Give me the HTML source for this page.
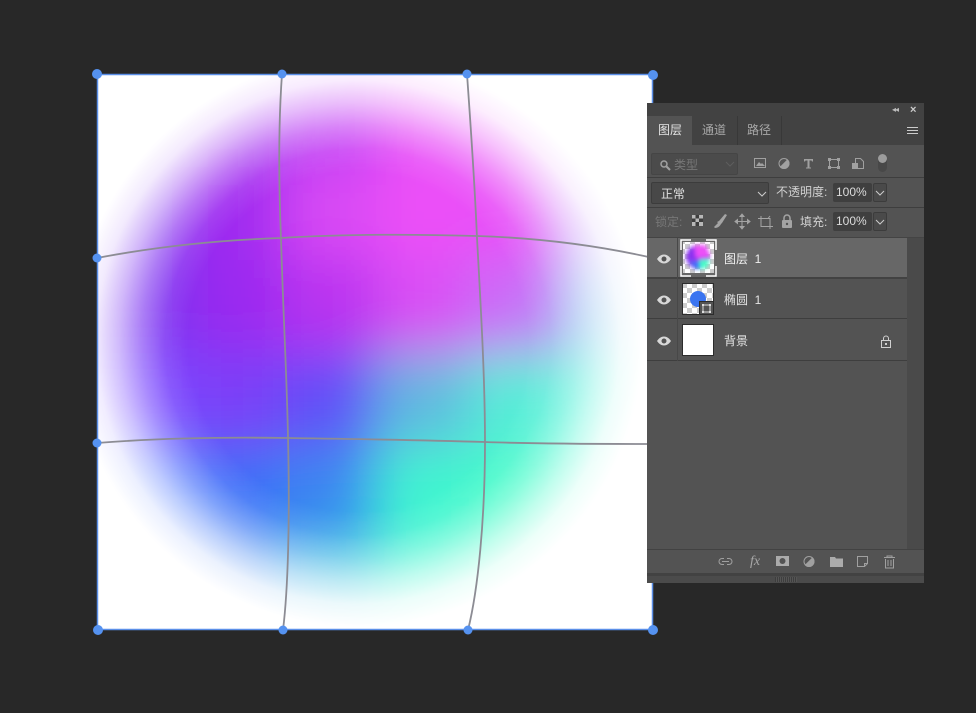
<!DOCTYPE html>
<html><head><meta charset="utf-8"><style>
*{box-sizing:border-box}
html,body{margin:0;padding:0;width:976px;height:713px;overflow:hidden;background:#282828;font-family:"Liberation Sans","Noto Sans CJK SC",sans-serif}
.abs,.t{position:absolute}
.t{white-space:nowrap;font-size:12px;line-height:14px;color:#d4d4d4}
#panel{position:absolute;left:647px;top:103px;width:277px;height:480px;background:#535353;overflow:hidden}
.line{position:absolute;height:1px;background:#3e3e3e;left:0;right:0}
.box{position:absolute;background:#454545;border:1px solid #3c3c3c;border-radius:2px}
</style></head><body>
<svg class="abs" style="left:0;top:0" width="976" height="713">
<defs>
<filter id="mesh" filterUnits="userSpaceOnUse" x="0" y="0" width="976" height="713"><feGaussianBlur stdDeviation="27"/></filter>
<radialGradient id="rg" gradientUnits="userSpaceOnUse" cx="358" cy="342" r="285">
<stop offset=".596" stop-color="#fff" stop-opacity="1"/>
<stop offset=".677" stop-color="#fff" stop-opacity=".896"/>
<stop offset=".758" stop-color="#fff" stop-opacity=".648"/>
<stop offset=".839" stop-color="#fff" stop-opacity=".352"/>
<stop offset=".919" stop-color="#fff" stop-opacity=".104"/>
<stop offset="1" stop-color="#fff" stop-opacity="0"/>
</radialGradient>
<mask id="m" maskUnits="userSpaceOnUse" x="0" y="0" width="976" height="713"><rect width="976" height="713" fill="url(#rg)"/></mask>
<clipPath id="c"><rect x="97" y="74" width="556" height="556"/></clipPath>
</defs>
<g clip-path="url(#c)">
<rect x="97" y="74" width="556" height="556" fill="#fff"/>
<g mask="url(#m)"><g filter="url(#mesh)">
<rect x="0" y="0" width="190" height="167" fill="#8a30f0"/><rect x="190" y="0" width="93" height="167" fill="#a030f0"/><rect x="283" y="0" width="93" height="167" fill="#c040f4"/><rect x="376" y="0" width="93" height="167" fill="#e850f8"/><rect x="469" y="0" width="93" height="167" fill="#e850f8"/><rect x="562" y="0" width="198" height="167" fill="#c080f8"/>
<rect x="0" y="167" width="190" height="93" fill="#8030f0"/><rect x="190" y="167" width="93" height="93" fill="#a02cf0"/><rect x="283" y="167" width="93" height="93" fill="#d848f4"/><rect x="376" y="167" width="93" height="93" fill="#ec50f8"/><rect x="469" y="167" width="93" height="93" fill="#e850f8"/><rect x="562" y="167" width="198" height="93" fill="#b080f8"/>
<rect x="0" y="260" width="190" height="93" fill="#7a30f0"/><rect x="190" y="260" width="93" height="93" fill="#9a2cf0"/><rect x="283" y="260" width="93" height="93" fill="#b830f0"/><rect x="376" y="260" width="93" height="93" fill="#d850f4"/><rect x="469" y="260" width="93" height="93" fill="#c870f8"/><rect x="562" y="260" width="198" height="93" fill="#90c8f0"/>
<rect x="0" y="353" width="190" height="93" fill="#7a48ff"/><rect x="190" y="353" width="93" height="93" fill="#7a40f8"/><rect x="283" y="353" width="93" height="93" fill="#6050f8"/><rect x="376" y="353" width="93" height="93" fill="#60b8e0"/><rect x="469" y="353" width="93" height="93" fill="#58ecd8"/><rect x="562" y="353" width="198" height="93" fill="#60f4dc"/>
<rect x="0" y="446" width="190" height="93" fill="#4070ff"/><rect x="190" y="446" width="93" height="93" fill="#3a70f8"/><rect x="283" y="446" width="93" height="93" fill="#3a88f0"/><rect x="376" y="446" width="93" height="93" fill="#40f4d0"/><rect x="469" y="446" width="93" height="93" fill="#44fcc8"/><rect x="562" y="446" width="198" height="93" fill="#50fcd0"/>
<rect x="0" y="539" width="190" height="174" fill="#4070ff"/><rect x="190" y="539" width="93" height="174" fill="#3a80f0"/><rect x="283" y="539" width="93" height="174" fill="#40c0e0"/><rect x="376" y="539" width="93" height="174" fill="#48f8d0"/><rect x="469" y="539" width="93" height="174" fill="#50fcc8"/><rect x="562" y="539" width="198" height="174" fill="#60f8d0"/>
</g></g>
</g>
<g fill="none" stroke="#8c8c94" stroke-width="1.800">
<path d="M282 74C278 130 279 190 281 238C283 310 287 380 288 438C290 520 288 590 283 630"/>
<path d="M467 74C471 130 475 190 477 238C481 310 485 380 485 442C485 520 478 590 468 630"/>
<path d="M97 258C160 246 220 240 281 238C345 234 410 234 477 236C540 238 600 246 653 258"/>
<path d="M97 443C160 438 225 437 288 438C355 439 420 440 485 442C540 444 600 444 653 444"/>
</g>
<rect x="97.500" y="74.500" width="555" height="555" fill="none" stroke="#5b8fe8" stroke-width="1.500"/>
<g fill="#5592f0">
<circle cx="97" cy="74" r="5"/><circle cx="282" cy="74" r="4.500"/><circle cx="467" cy="74" r="4.500"/><circle cx="653" cy="75" r="5"/>
<circle cx="97" cy="258" r="4.500"/><circle cx="97" cy="443" r="4.500"/>
<circle cx="98" cy="630" r="5"/><circle cx="283" cy="630" r="4.500"/><circle cx="468" cy="630" r="4.500"/><circle cx="653" cy="630" r="5"/>
</g>
</svg>

<div id="panel">
  <div class="abs" style="left:0;top:0;width:277px;height:13px;background:#424242"></div>
  <div class="t" style="left:245px;top:2px;font-size:8px;line-height:10px;color:#bbb;letter-spacing:-1px">◂◂</div>
  <div class="t" style="left:263px;top:1px;font-size:11px;line-height:12px;color:#ccc;font-weight:bold">×</div>
  <div class="abs" style="left:0;top:13px;width:277px;height:29px;background:#424242"></div>
  <div class="abs" style="left:0;top:13px;width:45px;height:29px;background:#535353"></div>
  <div class="abs" style="left:90px;top:13px;width:1px;height:29px;background:#383838"></div>
  <div class="abs" style="left:134px;top:13px;width:1px;height:29px;background:#383838"></div>
  <div class="t" style="left:11px;top:20px;color:#e4e4e4">图层</div>
  <div class="t" style="left:55px;top:20px;color:#a8a8a8">通道</div>
  <div class="t" style="left:100px;top:20px;color:#a8a8a8">路径</div>
  <div class="abs" style="left:260px;top:24px;width:11px;height:7px;border-top:1px solid #ccc;border-bottom:1px solid #ccc"><div style="height:1px;background:#ccc;margin-top:2px"></div></div>

  <div class="box" style="left:4px;top:50px;width:87px;height:22px;background:#4b4b4b;border-color:#454545"></div>
  <svg class="abs" style="left:12px;top:56px" width="12" height="12"><circle cx="5" cy="5" r="3" fill="none" stroke="#a0a0a0" stroke-width="1.500"/><path d="M7.500 7.500L11 11" stroke="#a0a0a0" stroke-width="2"/></svg>
  <div class="t" style="left:27px;top:55px;color:#777">类型</div>
  <svg class="abs" style="left:78px;top:58px" width="10" height="7"><path d="M1 1l4 4 4-4" fill="none" stroke="#5e5e5e"/></svg>
  <svg class="abs" style="left:105px;top:52px" width="130" height="20" fill="none" stroke="#a0a0a0">
    <rect x="2.500" y="3.500" width="11" height="9"/><path d="M4 11l3-4 2 2 1-1 3 3z" fill="#a0a0a0" stroke="none"/>
    <circle cx="32" cy="8.500" r="5"/><path d="M32 3.500a5 5 0 0 1 0 10z" fill="#a0a0a0" transform="rotate(45 32 8.500)"/>
    <path d="M52 4h9v2.500h-1l-.5-1h-2v7h1.500v1h-5v-1h1.500v-7h-2l-.5 1h-1z" fill="#a0a0a0" stroke="none"/>
    <rect x="77.500" y="4.500" width="9" height="8"/><g fill="#a0a0a0" stroke="none"><rect x="76" y="3" width="3" height="3"/><rect x="85" y="3" width="3" height="3"/><rect x="76" y="11" width="3" height="3"/><rect x="85" y="11" width="3" height="3"/></g>
    <path d="M103.500 3.500h5l3 3v7h-8z"/><rect x="100" y="8" width="6" height="6" fill="#a0a0a0" stroke="none"/>
  </svg>
  <div class="abs" style="left:231px;top:51px;width:9px;height:18px;border-radius:5px;background:#484848"></div>
  <div class="abs" style="left:231px;top:51px;width:9px;height:9px;border-radius:5px;background:#9c9c9c"></div>
  <div class="line" style="top:74px"></div>

  <div class="box" style="left:4px;top:79px;width:118px;height:22px;background:#484848"></div>
  <div class="t" style="left:14px;top:84px;color:#e0e0e0">正常</div>
  <svg class="abs" style="left:110px;top:88px" width="10" height="7"><path d="M1 1l4 4 4-4" fill="none" stroke="#ccc"/></svg>
  <div class="t" style="left:129px;top:82px;color:#d0d0d0">不透明度:</div>
  <div class="box" style="left:186px;top:80px;width:39px;height:19px;background:#3f3f3f;border-color:#3f3f3f"></div>
  <div class="t" style="left:189px;top:82px;color:#dcdcdc">100%</div>
  <div class="box" style="left:226px;top:80px;width:14px;height:19px;background:#4a4a4a"></div>
  <svg class="abs" style="left:228px;top:87px" width="10" height="7"><path d="M1 1l4 4 4-4" fill="none" stroke="#ccc"/></svg>
  <div class="line" style="top:104px"></div>

  <div class="t" style="left:8px;top:112px;color:#777">锁定:</div>
  <svg class="abs" style="left:44px;top:110px" width="112" height="18">
    <rect x="1" y="2" width="11" height="11" fill="#3e3e3e"/><g fill="#b8b8b8"><rect x="1" y="2" width="3.500" height="3.500"/><rect x="8" y="2" width="4" height="3.500"/><rect x="4.500" y="5.500" width="3.500" height="3.500"/><rect x="1" y="9" width="3.500" height="4"/><rect x="8" y="9" width="4" height="4"/></g>
    <path d="M34 2l-6 7-2 1 1 1-4 4 1 1c3 0 5-2 6-4l1-1 5-8z" fill="#a4a4a4" transform="translate(0 -1)"/>
    <path d="M51 2v13M45 8.500h13M51 1l-2 2.500h4zM51 16l-2-2.500h4zM44 8.500l2.500-2v4zM59 8.500l-2.500-2v4z" stroke="#a4a4a4" fill="#a4a4a4"/>
    <path d="M70 5.500h9v8h-9zM67 5.500h3M70 3v2.500M79 13.500v2.500M79 13.500h3M79 3l-2 2.500" fill="none" stroke="#a4a4a4"/>
    <rect x="91" y="7" width="10" height="8" rx="1" fill="#a4a4a4"/><path d="M93 7V5a3 3 0 0 1 6 0v2" fill="none" stroke="#a4a4a4" stroke-width="1.500"/><circle cx="96" cy="11" r="1.200" fill="#535353"/>
  </svg>
  <div class="t" style="left:153px;top:112px;color:#d0d0d0">填充:</div>
  <div class="box" style="left:186px;top:109px;width:39px;height:19px;background:#3f3f3f;border-color:#3f3f3f"></div>
  <div class="t" style="left:189px;top:111px;color:#dcdcdc">100%</div>
  <div class="box" style="left:226px;top:109px;width:14px;height:19px;background:#4a4a4a"></div>
  <svg class="abs" style="left:228px;top:116px" width="10" height="7"><path d="M1 1l4 4 4-4" fill="none" stroke="#ccc"/></svg>

  <div class="abs" style="left:0;top:134px;width:277px;height:1px;background:#444"></div>
  <div class="abs" style="left:260px;top:135px;width:17px;height:311px;background:#4a4a4a"></div>
  <div class="abs" style="left:0;top:135px;width:260px;height:39px;background:#676767"></div>
  <div class="abs" style="left:0;top:174px;width:260px;height:2px;background:#424242"></div>
  <div class="abs" style="left:0;top:215px;width:260px;height:1px;background:#3e3e3e"></div>
  <div class="abs" style="left:0;top:257px;width:260px;height:1px;background:#3e3e3e"></div>
  <div class="abs" style="left:30px;top:135px;width:1px;height:123px;background:#484848"></div>

  <svg class="abs" style="left:9px;top:150px" width="16" height="12"><path d="M1 6c4-6 10-6 14 0c-4 6-10 6-14 0z" fill="#d8d8d8"/><circle cx="8" cy="6" r="2.500" fill="#535353"/></svg>
  <svg class="abs" style="left:9px;top:191px" width="16" height="12"><path d="M1 6c4-6 10-6 14 0c-4 6-10 6-14 0z" fill="#d8d8d8"/><circle cx="8" cy="6" r="2.500" fill="#535353"/></svg>
  <svg class="abs" style="left:9px;top:232px" width="16" height="12"><path d="M1 6c4-6 10-6 14 0c-4 6-10 6-14 0z" fill="#d8d8d8"/><circle cx="8" cy="6" r="2.500" fill="#535353"/></svg>

  <svg class="abs" style="left:33px;top:136px" width="38" height="38">
    <defs>
      <pattern id="ck" width="10" height="10" patternUnits="userSpaceOnUse"><rect width="10" height="10" fill="#fff"/><rect width="5" height="5" fill="#ccc"/><rect x="5" y="5" width="5" height="5" fill="#ccc"/></pattern>
      <filter id="tb" x="-50%" y="-50%" width="200%" height="200%"><feGaussianBlur stdDeviation="2"/></filter>
      <clipPath id="tc"><rect x="3" y="3" width="31" height="31"/></clipPath>
    </defs>
    <rect x="3" y="3" width="31" height="31" fill="url(#ck)"/>
    <g clip-path="url(#tc)" filter="url(#tb)">
      <circle cx="18" cy="18" r="12" fill="#8a30f0"/>
      <path d="M14 6h12l4 12-14 1z" fill="#ec50f8"/>
      <path d="M9 22l12 1 2 7-8 0z" fill="#3a70f8"/>
      <path d="M19 21l11-1-3 9-7 1z" fill="#48fcc8"/>
    </g>
    <path d="M1 11V1h10M26 1h10v10M36 27v10H26M11 37H1V27" fill="none" stroke="#fff" stroke-width="1.500"/>
  </svg>
  <div class="t" style="left:77px;top:149px;color:#f0f0f0">图层&nbsp; 1</div>

  <svg class="abs" style="left:35px;top:180px" width="34" height="33">
    <rect x=".5" y=".5" width="31" height="31" fill="url(#ck)" stroke="#2c2c2c"/>
    <circle cx="16" cy="16" r="8" fill="#3a74f0"/>
    <rect x="17.500" y="18.500" width="14" height="13" fill="#535353" stroke="#2c2c2c"/>
    <rect x="21" y="22" width="7" height="7" fill="none" stroke="#ddd"/>
    <g fill="#ddd"><rect x="20" y="21" width="2" height="2"/><rect x="27" y="21" width="2" height="2"/><rect x="20" y="28" width="2" height="2"/><rect x="27" y="28" width="2" height="2"/></g>
  </svg>
  <div class="t" style="left:77px;top:190px;color:#e4e4e4">椭圆&nbsp; 1</div>

  <div class="abs" style="left:35px;top:221px;width:32px;height:32px;background:#fff;border:1px solid #2c2c2c"></div>
  <div class="t" style="left:77px;top:231px;color:#e4e4e4">背景</div>
  <svg class="abs" style="left:233px;top:232px" width="12" height="14"><rect x="1.500" y="5.500" width="9" height="7" fill="none" stroke="#d0d0d0"/><path d="M3.500 5.500V3.500a2.500 2.500 0 0 1 5 0v2" fill="none" stroke="#d0d0d0"/><rect x="5" y="8" width="2" height="2" fill="#d0d0d0"/></svg>

  <div class="line" style="top:446px;background:#424242"></div>
  <svg class="abs" style="left:70px;top:450px" width="180" height="18" fill="none" stroke="#a0a0a0">
    <path d="M7 6H5a3 3 0 0 0 0 6h2M10 6h2a3 3 0 0 1 0 6h-2M5 9h7" transform="translate(0 -.500)"/>
    <rect x="59" y="3" width="13" height="10" fill="#ababab" stroke="none"/><circle cx="65.500" cy="8" r="3" fill="#535353" stroke="none"/>
    <circle cx="92" cy="8.500" r="5"/><path d="M92 3.500a5 5 0 0 1 0 10z" fill="#a0a0a0" transform="rotate(45 92 8.500)"/>
    <path d="M113 4h5l1 1.500h7V14h-13z" fill="#ababab" stroke="none"/>
    <path d="M140.500 3.500h10v7l-3 3h-7zM147.500 13.500v-3h3"/>
    <path d="M167 4.500h11M170 4.500V3h5v1.500M168.500 6v9h8V6M171 7v6M174 7v6"/>
  </svg>
  <div class="t" style="left:103px;top:451px;font:italic 14px/16px 'Liberation Serif',serif;color:#a8a8a8">fx</div>
  <div class="abs" style="left:0;top:470px;width:277px;height:3px;background:#424242"></div>
  <div class="abs" style="left:0;top:473px;width:277px;height:7px;background:#4b4b4b"></div>
  <div class="abs" style="left:128px;top:474px;width:22px;height:5px;background:repeating-linear-gradient(90deg,#3e3e3e 0 1px,#555 1px 2px)"></div>
</div>
</body></html>
